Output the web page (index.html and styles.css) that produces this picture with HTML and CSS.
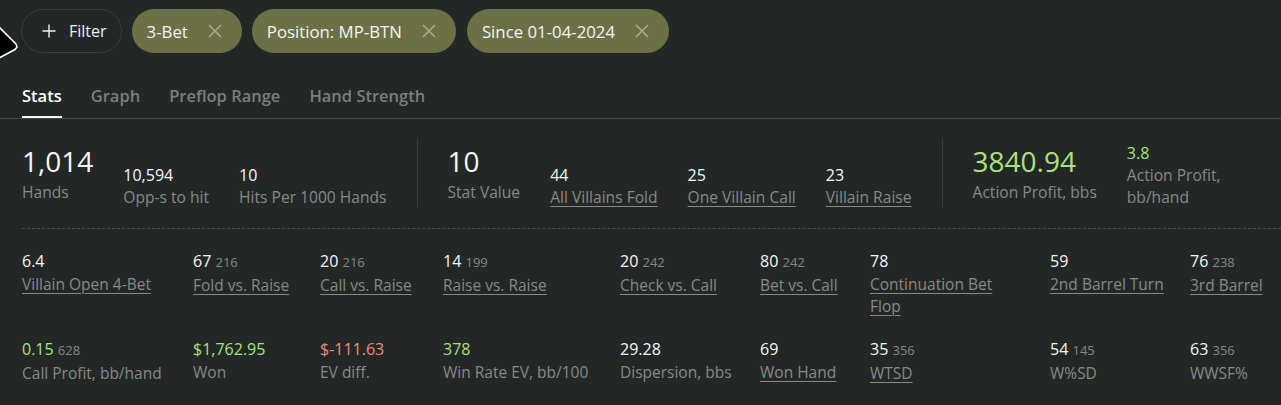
FILE: index.html
```html
<!DOCTYPE html>
<html lang="en">
<head>
<meta charset="utf-8">
<title>Stats</title>
<link rel="stylesheet" href="styles.css">
</head>
<body>
<div class="page">
  <div class="toolbar">
    <button class="filter-btn">
      <svg class="plus" width="14" height="14" viewBox="0 0 14 14"><path d="M7 0.5V13.5M0.5 7H13.5" stroke="#f2f2f2" stroke-width="1.4" fill="none"/></svg>
      <span>Filter</span>
    </button>
    <div class="chip"><span>3-Bet</span><svg class="x" width="14" height="14" viewBox="0 0 14 14"><path d="M1 1L13 13M13 1L1 13" stroke="#a9ac90" stroke-width="1.5" fill="none"/></svg></div>
    <div class="chip"><span>Position: MP-BTN</span><svg class="x" width="14" height="14" viewBox="0 0 14 14"><path d="M1 1L13 13M13 1L1 13" stroke="#a9ac90" stroke-width="1.5" fill="none"/></svg></div>
    <div class="chip chip-wide"><span>Since 01-04-2024</span><svg class="x" width="14" height="14" viewBox="0 0 14 14"><path d="M1 1L13 13M13 1L1 13" stroke="#a9ac90" stroke-width="1.5" fill="none"/></svg></div>
  </div>

  <div class="tabs">
    <div class="tab active">Stats</div>
    <div class="tab">Graph</div>
    <div class="tab">Preflop Range</div>
    <div class="tab">Hand Strength</div>
  </div>

  <div class="summary">
    <div class="stat big">
      <div class="val">1,014</div>
      <div class="lbl">Hands</div>
    </div>
    <div class="stat">
      <div class="val">10,594</div>
      <div class="lbl">Opp-s to hit</div>
    </div>
    <div class="stat">
      <div class="val">10</div>
      <div class="lbl">Hits Per 1000 Hands</div>
    </div>
    <div class="divider"></div>
    <div class="stat big">
      <div class="val">10</div>
      <div class="lbl">Stat Value</div>
    </div>
    <div class="stat">
      <div class="val">44</div>
      <div class="lbl"><a class="link">All Villains Fold</a></div>
    </div>
    <div class="stat">
      <div class="val">25</div>
      <div class="lbl"><a class="link">One Villain Call</a></div>
    </div>
    <div class="stat">
      <div class="val">23</div>
      <div class="lbl"><a class="link">Villain Raise</a></div>
    </div>
    <div class="divider"></div>
    <div class="stat big">
      <div class="val green">3840.94</div>
      <div class="lbl">Action Profit, bbs</div>
    </div>
    <div class="stat">
      <div class="val green">3.8</div>
      <div class="lbl narrow">Action Profit, bb/hand</div>
    </div>
  </div>

  <div class="grid">
    <div class="cell"><div class="val">6.4</div><div class="lbl"><a class="link">Villain Open 4-Bet</a></div></div>
    <div class="cell"><div class="val">67 <span class="cnt">216</span></div><div class="lbl"><a class="link">Fold vs. Raise</a></div></div>
    <div class="cell"><div class="val">20 <span class="cnt">216</span></div><div class="lbl"><a class="link">Call vs. Raise</a></div></div>
    <div class="cell"><div class="val">14 <span class="cnt">199</span></div><div class="lbl"><a class="link">Raise vs. Raise</a></div></div>
    <div class="cell"><div class="val">20 <span class="cnt">242</span></div><div class="lbl"><a class="link">Check vs. Call</a></div></div>
    <div class="cell"><div class="val">80 <span class="cnt">242</span></div><div class="lbl"><a class="link">Bet vs. Call</a></div></div>
    <div class="cell"><div class="val">78</div><div class="lbl wrap"><a class="link">Continuation Bet Flop</a></div></div>
    <div class="cell"><div class="val">59</div><div class="lbl"><a class="link">2nd Barrel Turn</a></div></div>
    <div class="cell"><div class="val">76 <span class="cnt">238</span></div><div class="lbl"><a class="link">3rd Barrel</a></div></div>

    <div class="cell"><div class="val"><span class="green">0.15</span> <span class="cnt">628</span></div><div class="lbl">Call Profit, bb/hand</div></div>
    <div class="cell"><div class="val green">$1,762.95</div><div class="lbl">Won</div></div>
    <div class="cell"><div class="val red">$-111.63</div><div class="lbl">EV diff.</div></div>
    <div class="cell"><div class="val green">378</div><div class="lbl">Win Rate EV, bb/100</div></div>
    <div class="cell"><div class="val">29.28</div><div class="lbl">Dispersion, bbs</div></div>
    <div class="cell"><div class="val">69</div><div class="lbl"><a class="link">Won Hand</a></div></div>
    <div class="cell"><div class="val">35 <span class="cnt">356</span></div><div class="lbl"><a class="link">WTSD</a></div></div>
    <div class="cell"><div class="val">54 <span class="cnt">145</span></div><div class="lbl">W%SD</div></div>
    <div class="cell"><div class="val">63 <span class="cnt">356</span></div><div class="lbl">WWSF%</div></div>
  </div>

  <svg class="cursor" width="24" height="70" viewBox="0 0 24 70"><polygon points="-20,8 16,44 17,47 15,49.5 0,57.5 -20,62" fill="#000" stroke="#fff" stroke-width="1.6" stroke-linejoin="round"/></svg>
</div>
</body>
</html>
```

FILE: styles.css
```css
* { box-sizing: border-box; }

html, body {
  margin: 0;
  padding: 0;
  background: #232826;
}

body {
  font-family: "Open Sans", "Noto Sans", sans-serif;
  color: #f2f2f2;
  width: 1281px;
  height: 405px;
  overflow: hidden;
}

.page {
  position: relative;
  height: 405px;
}

/* toolbar */
.toolbar {
  display: flex;
  align-items: center;
  gap: 10px;
  padding: 9px 0 0 21px;
}

.filter-btn {
  display: flex;
  align-items: center;
  gap: 13px;
  height: 44px;
  padding: 0 14px 0 20px;
  border: 1px solid #3a3f3c;
  border-radius: 22px;
  background: transparent;
  color: #eeeeee;
  font-family: inherit;
  font-size: 16px;
}

.chip {
  display: flex;
  align-items: center;
  gap: 20px;
  height: 44px;
  padding: 0 20px 0 15px;
  border-radius: 22px;
  background: #6c7046;
  color: #f5f5f5;
  font-size: 16.8px;
}

.chip-wide { margin-left: 1px; }

.x { flex: none; }

/* tabs */
.tabs {
  display: flex;
  gap: 29px;
  margin-top: 32px;
  padding-left: 22px;
  border-bottom: 1px solid #474c49;
}

.tab {
  font-size: 16.5px;
  font-weight: 600;
  line-height: 22px;
  color: #7b7f7d;
  padding-bottom: 9px;
  border-bottom: 2px solid transparent;
}

.tab.active {
  color: #ffffff;
  border-bottom-color: #f2f2f2;
}

/* summary */
.summary {
  display: flex;
  align-items: flex-end;
  gap: 30px;
  margin-left: 22px;
  padding: 23px 0 20px;
  border-bottom: 1px dashed #4a4f4c;
}

.stat .val {
  font-size: 16px;
  line-height: 22px;
  color: #f7f7f7;
}

.stat .lbl {
  font-size: 15.6px;
  line-height: 22px;
  color: #878a88;
  white-space: nowrap;
}

.stat.big .val {
  font-size: 28px;
  line-height: 36px;
  margin-bottom: 2px;
}

.stat.big .lbl {
  padding-bottom: 5px;
}

.stat .lbl.narrow {
  white-space: normal;
  max-width: 105px;
}

.divider {
  align-self: stretch;
  width: 1px;
  background: #3a3f3c;
  margin: -3px 0 1px;
}

.link {
  color: #878a88;
  text-decoration: underline;
  text-decoration-thickness: 1px;
  text-underline-offset: 3px;
}

.green { color: #a9e27f !important; }
.red { color: #f08b7b !important; }

/* grid */
.grid {
  display: grid;
  grid-template-columns: 141px 97px 93px 147px 110px 80px 150px 110px auto;
  column-gap: 30px;
  row-gap: 21px;
  padding: 21px 0 0 22px;
}

.cell .val {
  font-size: 16px;
  line-height: 22px;
  color: #f7f7f7;
  white-space: nowrap;
}

.cnt {
  font-size: 13px;
  color: #858886;
}

.cell .lbl {
  margin-top: 1px;
  font-size: 15.5px;
  line-height: 22px;
  color: #878a88;
  white-space: nowrap;
}

.cell .lbl.wrap {
  white-space: normal;
  max-width: 130px;
}

.cursor {
  position: absolute;
  left: 0;
  top: 0;
}
```
